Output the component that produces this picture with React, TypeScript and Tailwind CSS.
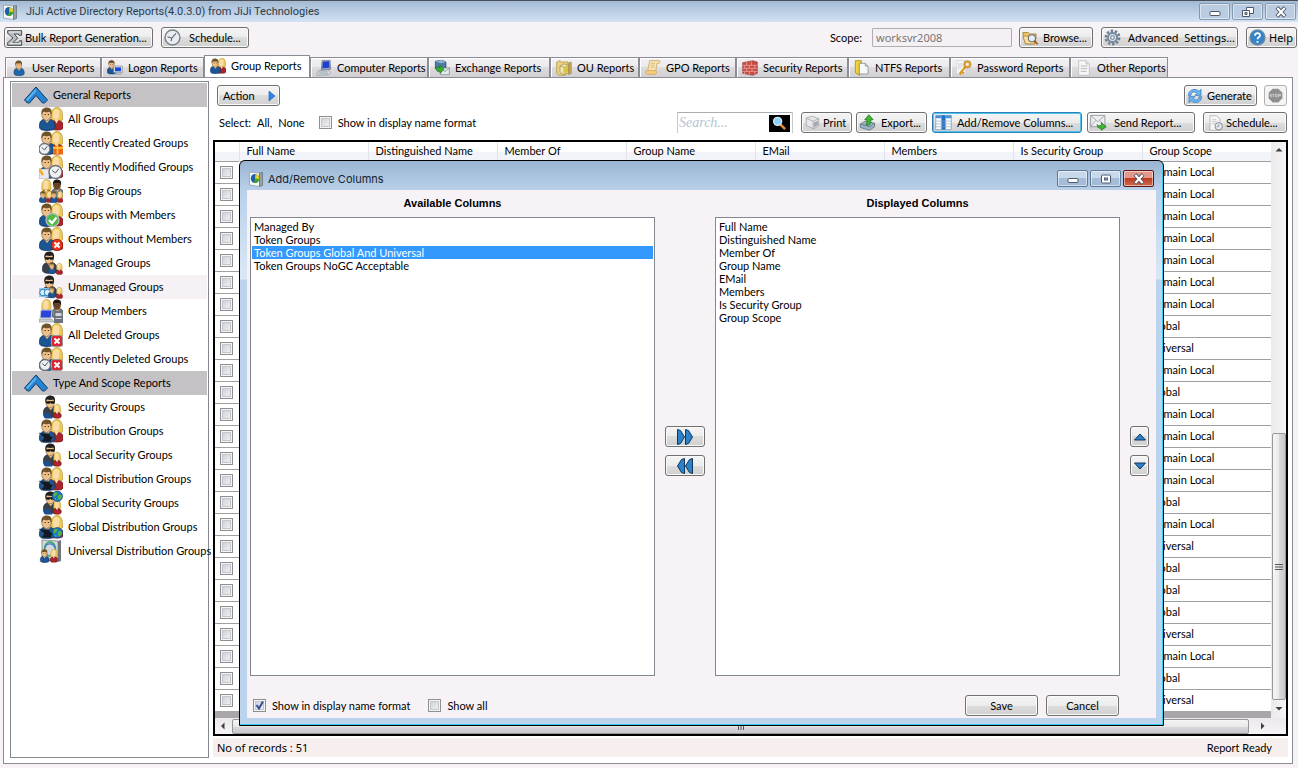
import type { ReactNode } from "react";
import clsx from "clsx";

const buttonBase =
  "flex items-center h-[21px] rounded-[3px] border bg-[linear-gradient(#f4f4f4,#ececec_50%,#dddddd_50%,#d0d0d0)] whitespace-nowrap";
const buttonStyle = clsx(buttonBase, "border-[#707070] shadow-[inset_0_0_0_1px_#fafafa]");
const focusedButton = clsx(buttonBase, "border-[#2c7fb8] shadow-[inset_0_0_0_1px_#4cc4ec]");

const boxStyle =
  "appearance-none block w-[13px] h-[13px] border border-[#8e8f8f] bg-[linear-gradient(135deg,#c9ccd4,#f6f6f8)] shadow-[inset_0_0_0_1px_#f4f4f4,inset_0_0_0_2px_#c3c6cc]";

/* ---------- icons ---------- */

function Svg({ size = 18, box = 24, children }: { size?: number; box?: number; children: ReactNode }) {
  return (
    <svg width={size} height={size} viewBox={`0 0 ${box} ${box}`} className="shrink-0" aria-hidden="true">
      {children}
    </svg>
  );
}

function Man({ t = "", hair = "#6f5228", skin = "#edc18c", coat = "#1c5593" }) {
  return (
    <g transform={t}>
      <path d="M0.5 20C0 14 3 12.500 6 12h4c4 .5 6 3 6 8 0 2.500-3 3.500-8 3.500S.5 22.500.5 20Z" fill={coat} stroke="#0d2c50" strokeWidth=".7" />
      <path d="M5 12l3 4 3.500-4Z" fill="#e9bc85" />
      <ellipse cx="7.500" cy="7.500" rx="4.600" ry="6" fill={skin} stroke="#7a5324" strokeWidth=".6" />
      <path d="M2.600 8C1.500 2.500 4.500.5 8 .6c4 .1 5.500 3 4.300 7.400-.8-1.500-1-2.500-1.500-3.300-2 .8-5 .3-6.500 0C3.500 5.500 3.300 6.500 2.600 8Z" fill={hair} />
      <path d="M5.500 7.500h1.300M8.800 7.500h1.300" stroke="#3c2510" strokeWidth=".9" />
    </g>
  );
}

function Woman({ t = "", hair = "#ecc75a", coat = "#a8242b" }) {
  return (
    <g transform={t}>
      <path d="M1 11C1 4 3 .5 7 .5S13 4 12.500 13c-2 2-9 2-11.500 0Z" fill={hair} stroke="#b08a2c" strokeWidth=".6" />
      <path d="M0 19c0-4 3-5.500 7-5.500s6.500 2 6.500 5.500-2.500 4-6.500 4S0 22.500 0 19Z" fill={coat} stroke="#6c0f16" strokeWidth=".7" />
      <ellipse cx="6" cy="8" rx="3.300" ry="5" fill="#fbdca8" />
      <path d="M3 6c1-3 4-3 7 0-.5-4-6.500-6-7 0Z" fill="#fbea9d" />
      <path d="M4.500 13l2 3.500 2-3.500Z" fill="#fbdca8" />
    </g>
  );
}

function Agent({ t = "" }) {
  return (
    <g transform={t}>
      <Man hair="#23211f" coat="#3b4048" />
      <path d="M3.200 6.500h9v2.400l-3.500.3-1-1.200-1 1.200-3.500-.3Z" fill="#111" />
    </g>
  );
}

function Clock({ x, y, r = 5.500 }: { x: number; y: number; r?: number }) {
  return (
    <g>
      <circle cx={x} cy={y} r={r} fill="#eef1f4" stroke="#6d7276" strokeWidth="1.300" />
      <path d={`M${x - r / 2} ${y - 1.500}L${x} ${y + 1}L${x + r / 2} ${y - r / 2}`} fill="none" stroke="#50565c" strokeWidth="1" />
    </g>
  );
}

function Cross({ round = false }) {
  return (
    <g>
      {round ? (
        <circle cx="18" cy="18" r="5.700" fill="#e2361c" stroke="#9c1c0c" strokeWidth=".8" />
      ) : (
        <rect x="12.500" y="12.500" width="11" height="11" rx="2" fill="#d92731" stroke="#9b9b9b" />
      )}
      <path d="M15.500 15.500l5 5M20.500 15.500l-5 5" stroke="#fff" strokeWidth="2" />
    </g>
  );
}

function Globe({ y }: { y: number }) {
  return (
    <g transform={`translate(13 ${y})`}>
      <circle cx="5.300" cy="5.300" r="5.200" fill="#1f77c9" stroke="#0d3f78" strokeWidth=".7" />
      <path d="M1.500 2.500C3 .8 5 1 5.500 2S4 4.500 3 5.500 1 4 1.500 2.500ZM6.500 4C8 3 9.500 3.500 9.800 5S8.500 9 7.300 9 5.300 5 6.500 4ZM3 7l1.500 1-.5 1.500L2.500 8.500Z" fill="#4cb848" />
    </g>
  );
}

const small = "translate(9 11) scale(.5)";
const smallWoman = "translate(17 12) scale(.5)";

function Pair() {
  return (
    <>
      <Woman t="translate(11 0)" />
      <Man />
    </>
  );
}

function AgentPair() {
  return (
    <>
      <Agent t="translate(4 0) scale(.95)" />
      <path d="M4.500 18h6l3 5.500H7c-2 0-3-2-2.500-5.500Z" fill="#194f8c" />
      <Woman t="translate(14 9) scale(.62)" />
    </>
  );
}

function Laptop() {
  return <path d="M0 14l10 .5 2 3 3-.5-3 4.500 3 1.500H2l3-4.500Z" fill="#15191f" stroke="#2a6ca8" strokeWidth=".5" />;
}

const groupIcons: Record<string, ReactNode> = {
  all: <Pair />,
  created: (
    <>
      <Pair />
      <Clock x={5.500} y={18} />
      <path d="M14 15h10v8.500H14Z" fill="#ea6a17" />
      <path d="M14 17h10M18.500 13v10" stroke="#ffd23c" strokeWidth="1.500" />
    </>
  ),
  modified: (
    <>
      <Pair />
      <path d="M0 14h10v10H0Z" fill="#e7e9ec" stroke="#8d9297" strokeWidth=".6" />
      <path d="M0 14l4 6" stroke="#f0b01c" strokeWidth="2.500" />
      <Clock x={16.500} y={17} r={6.500} />
    </>
  ),
  big: (
    <>
      <Man t="translate(12 0) scale(.8)" hair="#1d1713" skin="#6a4527" coat="#7b8188" />
      <Woman t="translate(2 0) scale(.8)" coat="#d9a93a" />
      <Man t="translate(0 12) scale(.5)" />
      <Woman t="translate(7 12) scale(.5)" />
      <Man t="translate(11 12) scale(.5)" />
      <Woman t="translate(18 12) scale(.45 .5)" />
    </>
  ),
  check: (
    <>
      <Pair />
      <circle cx="13.500" cy="17" r="6.500" fill="#4fbb46" stroke="#b7bcb7" strokeWidth="1.300" />
      <path d="M10 17l3 3 4.500-5.500" fill="none" stroke="#fff" strokeWidth="2.200" />
    </>
  ),
  without: (
    <>
      <Pair />
      <Cross round />
    </>
  ),
  managed: (
    <>
      <Agent t="translate(3 0) scale(.95)" />
      <Man t={small} />
      <Woman t={smallWoman} />
    </>
  ),
  unmanaged: (
    <>
      <Agent t="translate(3 0) scale(.95)" />
      <rect y="13" width="12" height="9" fill="#8fcaf0" />
      <circle cx="4" cy="17.500" r="3.300" fill="#d6effc" stroke="#2a7db8" />
      <circle cx="8.500" cy="17.500" r="3.300" fill="#d6effc" stroke="#2a7db8" />
      <Man t={small} />
      <Woman t={smallWoman} />
    </>
  ),
  members: (
    <>
      <Man t="translate(12 0) scale(.8)" hair="#1d1713" skin="#6a4527" coat="#7b8188" />
      <Woman t="translate(2 0) scale(.8)" />
      <path d="M2 11h11l-1 8H1Z" fill="#2745d8" stroke="#c8ccd2" />
      <path d="M0 20h13l2 3H0Z" fill="#c6cad0" stroke="#7b8087" strokeWidth=".5" />
      <path d="M15 12h9v12h-9Z" fill="#6d737b" />
      <path d="M16.500 14h6v3h-6ZM16.500 19h6v1h-6Z" fill="#d2d6db" />
    </>
  ),
  deleted: (
    <>
      <Pair />
      <Cross />
    </>
  ),
  recentDeleted: (
    <>
      <Pair />
      <Clock x={6} y={18} />
      <Cross />
    </>
  ),
  security: <AgentPair />,
  distribution: (
    <>
      <Pair />
      <Laptop />
    </>
  ),
  globalSecurity: (
    <>
      <AgentPair />
      <Globe y={0} />
    </>
  ),
  globalDistribution: (
    <>
      <Pair />
      <Laptop />
      <Globe y={12.500} />
    </>
  ),
  universal: (
    <>
      <path d="M3 1l16 1v20L3 21Z" fill="#d4d8da" stroke="#8d9294" />
      <path d="M19 2l3-1v21l-3 1Z" fill="#70777b" />
      <ellipse cx="11" cy="10" rx="5.500" ry="7" fill="none" stroke="#36a66f" strokeWidth="1.500" />
      <path d="M6 9c1-5 8-6 10 0" fill="none" stroke="#3a7ed0" strokeWidth="1.300" />
      <Man t="translate(1 10) scale(.58)" />
      <Woman t="translate(11 10) scale(.58)" />
    </>
  ),
};

function AppIcon() {
  return (
    <Svg size={16} box={16}>
      <path d="M1.500 1l10 1v13.500l-10-1.500Z" fill="#f6f8f9" stroke="#a3adb3" />
      <path d="M11.500 2l3-.5v13l-3 1Z" fill="#93a3a6" stroke="#5e6d70" strokeWidth=".7" />
      <ellipse cx="7" cy="7.500" rx="4.200" ry="4.500" fill="#1c5fa8" />
      <path d="M7.500 3A4.300 4.500 0 0 1 11.200 8L7 8Z" fill="#e8d21d" />
      <path d="M7 7.500l4.200.5A4.300 4.300 0 0 1 6 12Z" fill="#43a52c" />
    </Svg>
  );
}

const tabIcons: Record<string, ReactNode> = {
  user: <Man t="translate(4 0)" coat="#1f66ad" />,
  logon: (
    <>
      <Man t="scale(.9)" />
      <path d="M10 9h13v10H10Z" fill="#dfe4ea" stroke="#7c858f" />
      <path d="M12 11h9v6h-9Z" fill="#1846d6" />
      <path d="M13 20h8l1 2.500H12Z" fill="#adb4bc" />
    </>
  ),
  group: <Pair />,
  computer: (
    <>
      <path d="M9 1l12-1 1 14-14 1Z" fill="#9aa7b8" stroke="#5f6c7c" />
      <path d="M10.500 2.500l9-.7.700 10-10.700.7Z" fill="#1b3fd2" />
      <path d="M4 16l14-1 4 4-3 3-17 1-1-2Z" fill="#d9dde3" stroke="#868e99" />
      <path d="M5 18l12-.5M4 20l14-.5" stroke="#8d95a0" />
    </>
  ),
  exchange: (
    <>
      <path d="M2 2l9-2 7 3v10l-8 4-8-4Z" fill="#4e7ba6" stroke="#284765" />
      <path d="M2 2l8 3 8-2-7-3Z" fill="#8bb4d6" />
      <path d="M10 12h13v10H10Z" fill="#e7eaec" stroke="#777e84" />
      <path d="M10 12l6.500 5.500L23 12" fill="none" stroke="#777e84" />
      <path d="M2 11l7 0v-3l6 6-6 6v-3H5Z" fill="#35b02e" stroke="#166b13" />
    </>
  ),
  ou: (
    <>
      <path d="M1 3l5-2 2 2h10v16l-4 4H4L1 20Z" fill="#e9cf7c" stroke="#a98c3c" />
      <path d="M6 9l6-3 7 2v11l-7 3-6-3Z" fill="#f3e7b0" stroke="#9a8b54" />
      <path d="M6 9l6 2v11M19 8l-7 3" fill="none" stroke="#a7903c" />
      <path d="M13 11.500l5-2v8l-5 3Z" fill="#ddc42d" />
      <path d="M19 4l4-1v17l-4 2Z" fill="#c5a656" stroke="#8b6d28" strokeWidth=".6" />
    </>
  ),
  gpo: (
    <>
      <path d="M7 1h14c2 0 2 3 0 4h-3l-2 12H4Z" fill="#f7e6b4" stroke="#c5994a" />
      <path d="M2 16h14c2 0 2 5-1 5.500H4C1 21.500 0 17 2 16Z" fill="#f3ce83" stroke="#d39a4c" />
      <path d="M9 5h6M8.500 8h6M8 11h6" stroke="#d0a868" />
    </>
  ),
  security: (
    <>
      <path d="M1 4l15-3 7 2v17l-7 3-15-3Z" fill="#c94a45" stroke="#944340" />
      <path d="M1 8h22M1 12.500h22M1 17h22M7 3v5M14 2v6M4 8v4.500M11 8v4.500M19 8v4.500M7 12.500V17M15 12.500V17M4 17v4M11 17v5M19 17v4" stroke="#f1b6ac" strokeWidth="1" />
    </>
  ),
  ntfs: (
    <>
      <path d="M2 1h9v4l-3 1v17l-6-4Z" fill="#f0d334" stroke="#94791a" />
      <path d="M8 5h9l4 4v12H8Z" fill="#f5f7f8" stroke="#777c80" />
      <path d="M17 5v4h4" fill="#cfd4d8" stroke="#777c80" />
    </>
  ),
  password: (
    <>
      <path d="M1 1h13v20H1Z" fill="#f5f5f5" stroke="#d3d3d3" />
      <path d="M3 6h7M3 9h7M3 12h5" stroke="#bbb" />
      <path d="M15 9L6 20M8 17l4 3M5 19l3 3" stroke="#d89a1d" strokeWidth="3" />
      <circle cx="17" cy="6.500" r="4" fill="none" stroke="#e0a42c" strokeWidth="3" />
      <circle cx="17" cy="6.500" r="5.700" fill="none" stroke="#8d5f10" strokeWidth=".6" />
    </>
  ),
  other: (
    <>
      <path d="M4 1h11l5 5v17H4Z" fill="#f6f6f6" stroke="#b5b5b5" />
      <path d="M15 1v5h5" fill="#dedede" stroke="#b5b5b5" />
      <path d="M7 9h10M7 13h10M7 17h9" stroke="#b9b9b9" strokeWidth="1.500" />
    </>
  ),
};

/* ---------- data ---------- */

const tabs = [
  { id: "user", label: "User Reports", width: "w-[96px]" },
  { id: "logon", label: "Logon Reports", width: "w-[103px]" },
  { id: "group", label: "Group Reports", width: "w-[106px]" },
  { id: "computer", label: "Computer Reports", width: "w-[118px]" },
  { id: "exchange", label: "Exchange Reports", width: "w-[122px]" },
  { id: "ou", label: "OU Reports", width: "w-[89px]" },
  { id: "gpo", label: "GPO Reports", width: "w-[97px]" },
  { id: "security", label: "Security Reports", width: "w-[112px]" },
  { id: "ntfs", label: "NTFS Reports", width: "w-[102px]" },
  { id: "password", label: "Password Reports", width: "w-[120px]" },
  { id: "other", label: "Other Reports", width: "w-[98px]" },
];

const sections = [
  {
    title: "General Reports",
    items: [
      ["All Groups", "all"],
      ["Recently Created Groups", "created"],
      ["Recently Modified Groups", "modified"],
      ["Top Big Groups", "big"],
      ["Groups with Members", "check"],
      ["Groups without Members", "without"],
      ["Managed Groups", "managed"],
      ["Unmanaged Groups", "unmanaged"],
      ["Group Members", "members"],
      ["All Deleted Groups", "deleted"],
      ["Recently Deleted Groups", "recentDeleted"],
    ],
  },
  {
    title: "Type And Scope Reports",
    items: [
      ["Security Groups", "security"],
      ["Distribution Groups", "distribution"],
      ["Local Security Groups", "security"],
      ["Local Distribution Groups", "distribution"],
      ["Global Security Groups", "globalSecurity"],
      ["Global Distribution Groups", "globalDistribution"],
      ["Universal Distribution Groups", "universal"],
    ],
  },
];

const columns = ["Full Name", "Distinguished Name", "Member Of", "Group Name", "EMail", "Members", "Is Security Group", "Group Scope"];
const available = ["Managed By", "Token Groups", "Token Groups Global And Universal", "Token Groups NoGC Acceptable"];

const D = "Domain Local";
const G = "Global";
const U = "Universal";
const scopes = [D, D, D, D, D, D, D, G, U, D, G, D, D, D, D, G, D, U, G, G, G, U, D, G, U];

/* ---------- parts ---------- */

function CaptionButton({ label, className, children }: { label: string; className: string; children: ReactNode }) {
  return (
    <button aria-label={label} className={clsx("w-[31px] h-[17px] flex items-center justify-center border rounded-[2px] shadow-[inset_0_0_0_1px_#ffffff80]", className)}>
      <Svg size={12} box={12}>{children}</Svg>
    </button>
  );
}

const minimizeGlyph = <rect x="1" y="5.500" width="10" height="4" rx="1" fill="#fff" stroke="#4d5a6b" />;
const closeGlyph = (
  <>
    <path d="M2 1.500l8 9M10 1.500l-8 9" stroke="#4d4a55" strokeWidth="4" />
    <path d="M2.300 1.900l7.400 8.200M9.700 1.900l-7.400 8.200" stroke="#fff" strokeWidth="2.200" />
  </>
);

function TitleBar() {
  return (
    <header className="h-[22px] shrink-0 flex items-center pl-0.5 pr-0.5 border-t border-[#4a4f55] bg-[linear-gradient(#a3bad4,#d3e3f5)] text-[#2f3b47]">
      <AppIcon />
      <h1 className="ml-2 font-[Roboto,sans-serif]">JiJi Active Directory Reports(4.0.3.0) from JiJi Technologies</h1>
      <div className="ml-auto flex gap-0.5">
        <CaptionButton label="Minimize" className="border-[#8397ae] bg-[#b9cce2]">{minimizeGlyph}</CaptionButton>
        <CaptionButton label="Restore" className="border-[#8397ae] bg-[#b9cce2]">
          <path d="M4.500 1.500h7v6h-7Z" fill="#fff" stroke="#4d5a6b" />
          <path d="M.5 4.500h7v6h-7Z" fill="#fff" stroke="#4d5a6b" />
          <path d="M3 6.500h2v2H3Z" fill="#b9cce2" stroke="#4d5a6b" />
        </CaptionButton>
        <CaptionButton label="Close" className="border-[#8397ae] bg-[#b9cce2]">{closeGlyph}</CaptionButton>
      </div>
    </header>
  );
}

function Toolbar() {
  return (
    <div className="flex items-center h-[33px] pb-1.5 pt-1 pl-1 pr-px">
      <button className={clsx(buttonStyle, "w-[149px] pl-0.5 gap-0.5")}>
        <Svg size={16}>
          <path d="M1 1h21v7h-4l-1-2h-6l5 6-7 7h8l2-3h3v7H1v-4l8-7-8-7Z" fill="#b9bdc1" stroke="#4a4e52" strokeWidth="1.500" />
          <path d="M3 3h17M4 20h17" stroke="#eceef0" strokeWidth="1.500" />
        </Svg>
        Bulk Report Generation...
      </button>
      <button className={clsx(buttonStyle, "w-[88px] pl-0.5 gap-2 ml-2")}>
        <Svg size={17}>
          <circle cx="12" cy="12" r="10.500" fill="#e9edf3" stroke="#7b8189" strokeWidth="2" />
          <path d="M5 11l6 2 6-7M11 13l-1 4" fill="none" stroke="#5a6067" strokeWidth="1.500" />
        </Svg>
        Schedule...
      </button>
      <label htmlFor="scope" className="ml-auto mr-[10px]">Scope:</label>
      <input id="scope" readOnly defaultValue="worksvr2008" className="w-[140px] h-[19px] px-[3px] border border-[#aeaeae] rounded-[1px] bg-[#f5f0f4] text-[#767676] font-[Noto_Sans,sans-serif]" />
      <button className={clsx(buttonStyle, "w-[74px] pl-0.5 gap-1 ml-[7px]")}>
        <Svg size={17}>
          <path d="M1 5h8l2 2h9v4l-2 10H5Z" fill="#ecc56a" stroke="#9b7226" />
          <path d="M1 10h14l3 11H5Z" fill="#f8dfa0" stroke="#9b7226" />
          <circle cx="14" cy="13" r="5" fill="#e4f1fa" stroke="#6c6f74" strokeWidth="1.500" />
          <path d="M17.500 16.500l4.500 5" stroke="#a35a1c" strokeWidth="2.500" />
        </Svg>
        Browse...
      </button>
      <button className={clsx(buttonStyle, "w-[137px] pl-0.5 gap-[7px] ml-2 font-[Noto_Sans,sans-serif] whitespace-pre")}>
        <Svg size={17}>
          <circle cx="12" cy="12" r="9.500" fill="none" stroke="#6f8093" strokeWidth="3.500" strokeDasharray="3.500 2.470" />
          <circle cx="12" cy="12" r="6.500" fill="#dbe4ee" stroke="#7b8ca0" strokeWidth="3" />
          <circle cx="12" cy="12" r="2.500" fill="#fff" stroke="#66778b" strokeWidth="1.500" />
        </Svg>
        {"Advanced  Settings..."}
      </button>
      <button className={clsx(buttonStyle, "w-[51px] pl-0.5 gap-[3px] ml-2 font-[Noto_Sans,sans-serif]")}>
        <Svg size={17}>
          <circle cx="12" cy="12" r="10.500" fill="#3583c8" stroke="#6a87a4" strokeWidth="2" />
          <path d="M8.500 9.500c0-5 7-5 7-.5 0 3-3.500 2.500-3.500 5.500M12 17v2.500" fill="none" stroke="#fff" strokeWidth="2.500" />
        </Svg>
        Help
      </button>
    </div>
  );
}

function Tabs() {
  return (
    <nav role="tablist" className="flex items-end h-[23px] pl-0.5 -mb-px">
      {tabs.map((tab) => {
        const active = tab.id === "group";
        return (
          <button
            key={tab.id}
            role="tab"
            aria-selected={active}
            className={clsx(
              "flex items-center gap-[5px] pl-[5px] border-t border-x border-[#898c95] whitespace-nowrap",
              tab.width,
              active ? "h-[23px] pb-0.5 border-b border-b-white bg-white" : "h-[21px] border-b bg-[linear-gradient(#f3f1f3,#ebe9eb_50%,#dddbdd_50%,#d2d0d2)] shadow-[inset_1px_1px_0_#fff]"
            )}
          >
            <Svg size={16}>{tabIcons[tab.id]}</Svg>
            {tab.label}
          </button>
        );
      })}
    </nav>
  );
}

function Sidebar() {
  return (
    <aside className="w-[199px] shrink-0 border border-[#828790] bg-white p-px">
      {sections.map((section) => (
        <section key={section.title}>
          <button className="w-full h-6 flex items-center gap-[5px] pl-3 bg-[#c5c2c5]">
            <Svg size={24}>
              <path d="M12 4L.5 17l3 3h2L12 12.500l6.500 7.500h2l3-3Z" fill="#2583cf" stroke="#0c3b6e" strokeLinejoin="round" />
              <path d="M12 5.500L2 16.500l1.500 1.500L12 8.500Z" fill="#5db4ec" />
            </Svg>
            {section.title}
          </button>
          <ul>
            {section.items.map(([label, icon]) => (
              <li key={label}>
                <a href="#" className={clsx("h-6 flex items-center gap-[5px] pl-[27px] whitespace-nowrap", icon === "unmanaged" && "bg-[#f5f1f5]")}>
                  <Svg size={24}>{groupIcons[icon]}</Svg>
                  {label}
                </a>
              </li>
            ))}
          </ul>
        </section>
      ))}
    </aside>
  );
}

function Actions() {
  return (
    <div className="flex flex-col gap-1.5 pl-1 pr-px">
      <div className="flex">
        <button className={clsx(buttonStyle, "w-[63px] pl-[5px] gap-3")}>
          Action
          <Svg size={10} box={10}>
            <path d="M2 0l6 5-6 5Z" fill="#2a86e8" stroke="#1b5cae" strokeWidth=".6" />
          </Svg>
        </button>
        <button className={clsx(buttonStyle, "w-[73px] pl-0.5 gap-1 ml-auto")}>
          <Svg size={16}>
            <path d="M2 11C2 3 12-1 18 5l3-3v9h-9l3-3C11 4 6 6 6 11Z" fill="#6cb8f4" stroke="#2668b4" />
            <path d="M22 13c0 8-10 12-16 6l-3 3v-9h9l-3 3c4 4 9 2 9-3Z" fill="#6cb8f4" stroke="#2668b4" />
          </Svg>
          Generate
        </button>
        <button aria-label="Stop" disabled className="w-[23px] h-[21px] ml-[7px] flex items-center justify-center rounded-[3px] border border-[#adb2b5] bg-[#f4f4f4]">
          <Svg size={15}>
            <path d="M7.500 1h9L23 7.500v9L16.500 23h-9L1 16.500v-9Z" fill="#8f8f8f" />
            <path d="M5.500 10h-2v2h2v2h-2M7 10h3M8.500 10v4.500M12 10h2.500v4H12ZM17 14.500V10h3v2.300h-3" fill="none" stroke="#dcdcdc" strokeWidth="1.200" />
          </Svg>
        </button>
      </div>
      <div className="flex items-center">
        <span className="ml-0.5">Select:</span>
        <a href="#" className="ml-1.5">All,</a>
        <a href="#" className="ml-1.5">None</a>
        <label className="ml-3.5 flex items-center gap-1.5">
          <input type="checkbox" className={boxStyle} />
          Show in display name format
        </label>
        <div className="ml-auto w-[116px] h-[21px] flex items-center border border-b-0 border-[#c9cacc] border-t-[#abadb3] bg-white">
          <input aria-label="Search" placeholder="Search..." className="w-0 flex-1 pl-px font-[Liberation_Serif,serif] italic text-[14px] outline-none placeholder:text-[#b4c4d4]" />
          <button aria-label="Find" className="w-[21px] h-[17px] mr-0.5 flex items-center justify-center bg-black">
            <Svg size={15}>
              <path d="M12 12l9 9" stroke="#e58a2c" strokeWidth="4" />
              <circle cx="9" cy="8.500" r="6.500" fill="#8fd0f7" stroke="#d6ecfa" strokeWidth="2" />
            </Svg>
          </button>
        </div>
        <button className={clsx(buttonStyle, "w-[51px] pl-[3px] gap-[3px] ml-2")}>
          <Svg size={15}>
            <path d="M2 5l9-3 11 4v11l-8 5-12-5Z" fill="#e6e7e9" stroke="#8e9298" />
            <path d="M2 5l11 5 9-4M13 10v12" fill="none" stroke="#8e9298" />
            <path d="M14 12l7-3v7l-7 4Z" fill="#a5a9ae" />
          </Svg>
          Print
        </button>
        <button className={clsx(buttonStyle, "w-[71px] pl-0.5 gap-[5px] ml-1")}>
          <Svg size={17}>
            <path d="M2 14l7-4 13 3v5l-7 5-13-4Z" fill="#9cb3c4" stroke="#53677a" />
            <path d="M2 14l13 4 7-5" fill="none" stroke="#53677a" />
            <path d="M10 15c2-2 1-5 1-7H8l6-7 6 7h-3c0 4-1 7-4 8Z" fill="#3fb534" stroke="#1c7216" />
          </Svg>
          Export...
        </button>
        <button className={clsx(focusedButton, "w-[150px] pl-0.5 gap-[5px] ml-[5px]")}>
          <Svg size={17}>
            <path d="M1 2h22v20H1Z" fill="#fff" stroke="#7494b5" />
            <path d="M1 2h22v4H1Z" fill="#4a8fd6" />
            <path d="M9 2h6v20H9Z" fill="#1f6fc4" />
            <path d="M1 10h22M1 14h22M1 18h22M9 2v20M15 2v20" stroke="#8fa9c4" />
          </Svg>
          Add/Remove Columns...
        </button>
        <button className={clsx(buttonStyle, "w-[108px] pl-0.5 gap-[7px] ml-[5px]")}>
          <Svg size={17}>
            <path d="M1 2h20v16H1Z" fill="#eceef0" stroke="#7e848b" />
            <path d="M1 2l10 9L21 2M1 18l7-9M21 18l-7-9" fill="none" stroke="#8d939a" />
            <path d="M10 15c2 2 4 2 6 1v-4l7 6-7 5v-3c-3 1-6-1-6-5Z" fill="#3fb534" stroke="#1c7216" />
          </Svg>
          Send Report...
        </button>
        <button className={clsx(buttonStyle, "w-[84px] pl-1 gap-0.5 ml-2")}>
          <Svg size={16}>
            <path d="M3 1h10l5 5v17H3Z" fill="#f5f5f6" stroke="#a4a8ad" />
            <path d="M6 7h6M6 10h8M6 13h5" stroke="#b4b8bd" />
            <circle cx="16" cy="17" r="5.500" fill="#e7eaf0" stroke="#888d95" strokeWidth="1.500" />
            <path d="M16 14v3l-3 1" fill="none" stroke="#666c74" />
          </Svg>
          Schedule...
        </button>
      </div>
    </div>
  );
}

function Grid() {
  return (
    <div className="mt-[7px] border-2 border-black bg-[#f3f1f5]">
      <div className="flex bg-[#a8a6a8]">
        <div className="flex-1 pb-[7px]">
          <table className="w-full table-fixed border-collapse bg-white text-left">
            <thead>
              <tr className="h-[19px] bg-[linear-gradient(#ffffff_50%,#f3f4f9_50%)]">
                <th className="w-6 p-0" aria-label="Select" />
                {columns.map((c) => (
                  <th key={c} className="p-0 pl-[7px] font-normal border-l border-[#e3e4e9]">{c}</th>
                ))}
              </tr>
            </thead>
            <tbody>
              {scopes.map((scope, i) => (
                <tr key={i} className="h-[22px] border-t border-[#a0a0a0]">
                  <td className="p-0 pl-[5px]">
                    <input type="checkbox" aria-label={`Select row ${i + 1}`} className={boxStyle} />
                  </td>
                  <td colSpan={7} />
                  <td className="p-0 pl-[7px]">{scope}</td>
                </tr>
              ))}
            </tbody>
          </table>
        </div>
        <div className="w-[15px] flex flex-col items-center bg-[linear-gradient(90deg,#ebe9eb,#f6f4f6)]">
          <Svg size={16} box={16}>
            <path d="M4.500 9.500h7L8 6Z" fill="#404040" />
          </Svg>
          <div className="mt-auto w-[14px] h-[267px] flex items-center justify-center rounded-[2px] border border-[#979797] bg-[linear-gradient(90deg,#f5f5f5,#e9e9eb_50%,#d9dadc_50%,#c8c8cc)]">
            <Svg size={8} box={8}>
              <path d="M0 1.500h8M0 4h8M0 6.500h8" stroke="#555" />
            </Svg>
          </div>
          <Svg size={16} box={16}>
            <path d="M4.500 7h7L8 10.500Z" fill="#404040" />
          </Svg>
          <div className="h-0.5" />
        </div>
      </div>
      <div className="h-4 flex items-center pr-[15px] bg-[linear-gradient(#ebe9eb,#f6f4f6)]">
        <Svg size={16} box={16}>
          <path d="M9.500 4.500v7L6 8Z" fill="#404040" />
        </Svg>
        <div className="ml-px mr-[6px] flex-1 h-[15px] flex items-center justify-center rounded-[2px] border border-[#979797] bg-[linear-gradient(#f5f5f5,#e9e9eb_50%,#d9dadc_50%,#c8c8cc)]">
          <Svg size={8} box={8}>
            <path d="M1.500 0v8M4 0v8M6.500 0v8" stroke="#555" />
          </Svg>
        </div>
        <Svg size={16} box={16}>
          <path d="M6 4.500v7L9.500 8Z" fill="#404040" />
        </Svg>
      </div>
    </div>
  );
}

function ColumnList({ title, items, selected }: { title: string; items: string[]; selected?: string }) {
  return (
    <div className="w-[405px] flex flex-col">
      <label htmlFor={title} className="h-[27px] flex items-center justify-center pb-0.5 font-[Liberation_Sans,Arial,sans-serif] font-bold">{title}</label>
      <select
        id={title}
        size={20}
        defaultValue={selected}
        className="appearance-none flex-1 w-full border border-[#828790] bg-white px-px py-0.5 outline-none overflow-hidden"
      >
        {items.map((item) => (
          <option
            key={item}
            className="min-h-0 h-[13px] p-0 pl-0.5 leading-[13px] text-black checked:text-white checked:bg-[linear-gradient(#3399ff,#3399ff)]"
          >
            {item}
          </option>
        ))}
      </select>
    </div>
  );
}

function MoveButton({ label, width, d }: { label: string; width: string; d: string }) {
  return (
    <button aria-label={label} className={clsx(buttonStyle, "justify-center", width)}>
      <Svg size={16} box={16}>
        <path d={d} fill="#2b82c9" stroke="#0f3557" strokeLinejoin="round" />
      </Svg>
    </button>
  );
}

function ColumnsDialog() {
  return (
    <div
      role="dialog"
      aria-label="Add/Remove Columns"
      className="absolute left-[239px] top-[160px] w-[925px] h-[566px] flex flex-col rounded-t-[6px] border border-black bg-[linear-gradient(#9ab4d2,#b9d1ea_30px,#dbe8f6_118px,#bcd3ee_119px)] shadow-[inset_-1px_-1px_0_#35cdf0] px-[7px] pb-[7px]"
    >
      <div className="h-[29px] shrink-0 flex items-center pt-1.5 pr-0.5">
        <div className="flex items-center gap-1 pl-px font-[Inter,sans-serif] text-[#16222e]">
          <AppIcon />
          <h2>Add/Remove Columns</h2>
        </div>
        <div className="ml-auto flex gap-0.5">
          <CaptionButton label="Minimize" className="border-[#5f7a99] bg-[linear-gradient(#c8d9eb_50%,#a4bcd8_50%)]">{minimizeGlyph}</CaptionButton>
          <CaptionButton label="Maximize" className="border-[#5f7a99] bg-[linear-gradient(#c8d9eb_50%,#a4bcd8_50%)]">
            <rect x="1.500" y="2" width="9" height="8" rx="1" fill="#fff" stroke="#4d5a6b" />
            <rect x="4.500" y="5" width="3" height="2" fill="#a4bcd8" stroke="#4d5a6b" />
          </CaptionButton>
          <CaptionButton label="Close" className="border-[#5b1712] bg-[linear-gradient(#e2998c_50%,#bd3b21_50%,#cf6a4f)]">{closeGlyph}</CaptionButton>
        </div>
      </div>
      <div className="flex-1 flex flex-col bg-[#f7f2f6] pl-[3px]">
        <div className="flex h-[486px]">
          <ColumnList title="Available Columns" items={available} selected={available[2]} />
          <div className="w-[60px] flex flex-col items-center gap-2 pt-[236px]">
            <MoveButton label="Add column" width="w-10" d="M.500.500l3 1 4 6.500-4 6.500-3 1ZM8.500.500l3 1 4 6.500-4 6.500-3 1Z" />
            <MoveButton label="Remove column" width="w-10" d="M7.500.500l-3 1-4 6.500 4 6.500 3 1ZM15.500.500l-3 1-4 6.500 4 6.500 3 1Z" />
          </div>
          <ColumnList title="Displayed Columns" items={columns} />
          <div className="flex flex-col gap-2 pl-2.5 pt-[236px]">
            <MoveButton label="Move up" width="w-[19px]" d="M2.500 11h11L8 5Z" />
            <MoveButton label="Move down" width="w-[19px]" d="M2.500 5h11L8 11Z" />
          </div>
        </div>
        <div className="flex-1 flex items-end pl-[3px] pb-0.5 pr-[37px]">
          <label className="h-[21px] flex items-center gap-1.5">
            <span className="grid">
              <input type="checkbox" defaultChecked className={clsx(boxStyle, "col-start-1 row-start-1")} />
              <span className="col-start-1 row-start-1 pointer-events-none">
                <Svg size={13} box={13}>
                  <path d="M3.500 6l2.500 3.500 4-7" fill="none" stroke="#2f4f9e" strokeWidth="2" />
                </Svg>
              </span>
            </span>
            Show in display name format
          </label>
          <label className="ml-[18px] h-[21px] flex items-center gap-1.5">
            <input type="checkbox" className={boxStyle} />
            Show all
          </label>
          <button className={clsx(buttonStyle, "w-[73px] justify-center ml-auto")}>Save</button>
          <button className={clsx(buttonStyle, "w-[73px] justify-center ml-2")}>Cancel</button>
        </div>
      </div>
    </div>
  );
}

export default function App() {
  return (
    <div className="relative min-h-screen flex flex-col bg-[#f7f2f6] font-[Lato,Arial,sans-serif] text-[11px] leading-4 text-black">
      <TitleBar />
      <Toolbar />
      <div className="flex-1 flex flex-col pl-[3px] pr-[5px] pb-1">
        <Tabs />
        <main className="flex-1 flex gap-1 border border-[#898c95] bg-white pl-1.5 pr-1 pt-[3px] pb-[5px]">
          <Sidebar />
          <div className="flex-1 min-w-0 pt-1">
            <Actions />
            <Grid />
            <footer className="mt-0.5 h-[19px] flex items-center justify-between pl-1 pr-4 bg-[#f7eeee]">
              <span className="font-[Noto_Sans,sans-serif]">No of records : 51</span>
              <span>Report Ready</span>
            </footer>
          </div>
        </main>
      </div>
      <ColumnsDialog />
    </div>
  );
}
